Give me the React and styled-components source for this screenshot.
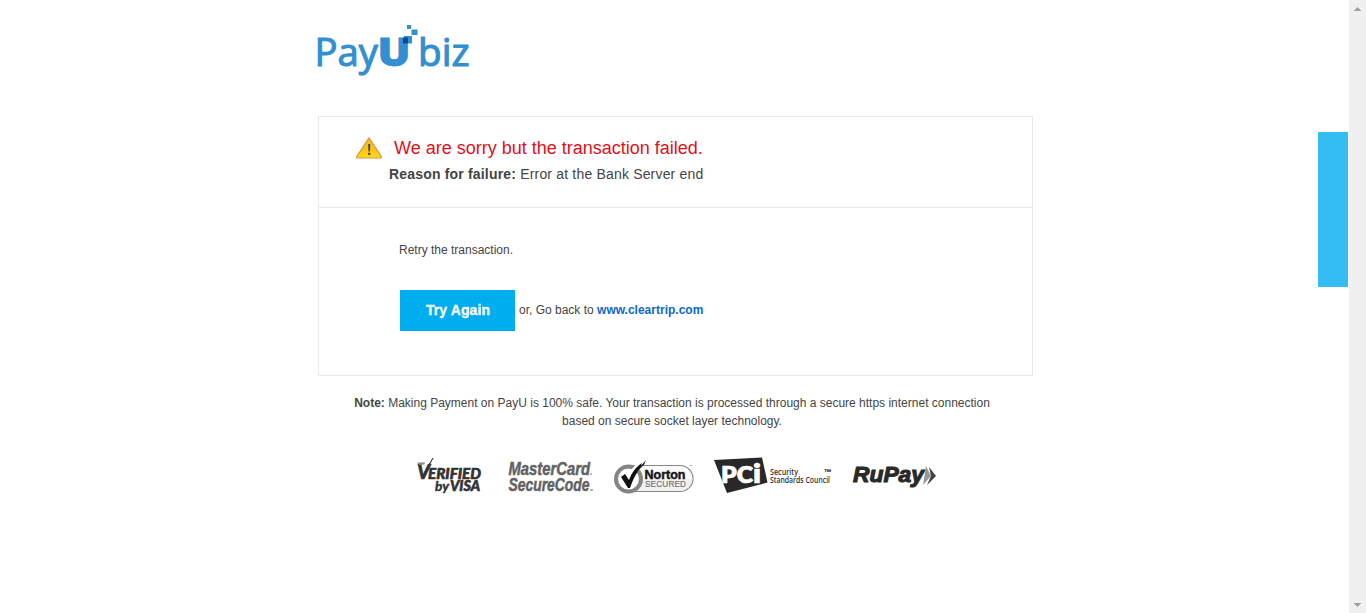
import React from 'react';
import styled, { createGlobalStyle } from 'styled-components';

const Global = createGlobalStyle`
  * { box-sizing: border-box; }
  html, body { margin: 0; background: #fff; overflow: hidden; }
  body { font-family: "Liberation Sans", Arial, sans-serif; font-size: 12px; color: #444; }
`;
const Shell = styled.div`
  display: flex;
  height: 613px;
  position: relative;
`;
const Content = styled.main`
  flex: 1;
  padding: 20px 0 0 318px;
`;
const Column = styled.div`
  width: 715px;
`;
const Header = styled.header`
  height: 96px;
  margin-left: -8px;
`;
const Panel = styled.section`
  height: 260px;
  border: 1px solid #e8e8e8;
`;
const Failure = styled.div`
  height: 91px;
  padding: 20px 0 0 37px;
  border-bottom: 1px solid #e8e8e8;
`;
const Title = styled.h1`
  margin: 0;
  height: 22px;
  display: flex;
  align-items: center;
  gap: 12px;
  font-size: 18px;
  font-weight: 400;
  line-height: 22px;
  color: #e0101c;
  white-space: nowrap;
`;
const Reason = styled.p`
  margin: 6px 0 0 33px;
  font-size: 14px;
  line-height: 18px;
  letter-spacing: 0.18px;
  white-space: nowrap;
`;
const Retry = styled.div`
  padding: 34px 0 0 80px;
`;
const RetryText = styled.p`
  margin: 0;
  line-height: 16px;
`;
const Actions = styled.div`
  margin: 32px 0 0 1px;
  display: flex;
  align-items: center;
  gap: 4px;
  white-space: pre;
`;
const BackText = styled.span`
  padding-bottom: 2px;
`;
const TryButton = styled.button`
  width: 115px;
  height: 41px;
  padding: 0 0 2px 1px;
  border: 0;
  background: #00aeef;
  color: #fff;
  font: bold 14px "Liberation Sans", Arial, sans-serif;
  letter-spacing: 0.1px;
  -webkit-text-stroke: 0.3px #fff;
`;
const Link = styled.a`
  color: #0b68ce;
  font-weight: bold;
`;
const Note = styled.p`
  margin: 18px 0 0;
  width: 708px;
  line-height: 18px;
  text-align: center;
`;
const Badges = styled.div`
  display: flex;
  margin: 20px 0 0 92px;
`;
const Mark = styled.svg`
  display: block;
  flex: none;
  overflow: visible;
  font-family: ${(p) => p.$font || '"Open Sans", sans-serif'};
`;
const SideTab = styled.aside`
  position: absolute;
  top: 132px;
  right: 18px;
  width: 30px;
  height: 155px;
  background: #33bdf2;
`;
const Scrollbar = styled.div`
  width: 17px;
  background: #f0f0f0;
  display: flex;
  flex-direction: column;
  justify-content: space-between;
`;

const PayULogo = () => (
  <Mark width="170" height="60" viewBox="310 20 170 60" fill="#338fd0" $font='"Open Sans", sans-serif'>
    <g stroke="#338fd0" strokeWidth="1.1" strokeLinejoin="round">
      <text x="314.500" y="66.200" fontSize="38.500" textLength="63.500" lengthAdjust="spacingAndGlyphs">Pay</text>
      <text x="418" y="66.200" fontSize="37.500" textLength="51.500" lengthAdjust="spacingAndGlyphs">biz</text>
    </g>
    <text x="377.500" y="66.300" fontSize="39" fontWeight="800" stroke="#338fd0" strokeWidth=".8" textLength="33" lengthAdjust="spacingAndGlyphs">U</text>
    <path d="M407 25h4v4h-4zM411.500 29.500h6v5.500h-6zM404 36h8v7.500h-8z" />
    <path d="M403 37.500h5v6h-5z" fill="#064a9b" />
  </Mark>
);

const Warning = () => (
  <Mark width="26" height="22" viewBox="0 0 26 22">
    <defs>
      <linearGradient id="amber" x2="0" y2="1">
        <stop stopColor="#f9bd22" />
        <stop offset=".55" stopColor="#fcc015" />
        <stop offset="1" stopColor="#ffdc16" />
      </linearGradient>
    </defs>
    <path d="M13 .8 L25.400 19.500 Q25.500 21 24.300 21 H1.700 Q.4 21 .7 19.500Z" fill="url(#amber)" stroke="#d59548" strokeWidth="1.200" strokeLinejoin="round" />
    <path d="M12 7h2.400l-.4 7.500h-1.600zM12 15.800h2.400v2.200h-2.400z" fill="#4a5362" />
  </Mark>
);

const Visa = () => (
  <Mark width="90" height="50" viewBox="410 450 90 50" fill="#333" $font='Lato, sans-serif'>
    <g fontStyle="italic" fontWeight="900" stroke="#333" strokeWidth=".6">
      <text x="417" y="479" fontSize="20" textLength="13" lengthAdjust="spacingAndGlyphs">V</text>
      <text x="428" y="478.500" fontSize="14.500" textLength="53" lengthAdjust="spacingAndGlyphs">ERIFIED</text>
      <text x="435" y="491" fontSize="14" strokeWidth=".3" textLength="14" lengthAdjust="spacingAndGlyphs">by</text>
      <text x="450" y="491" fontSize="14.500" textLength="30" lengthAdjust="spacingAndGlyphs">VISA</text>
    </g>
    <path d="M417 462.500h8l-.5 2-5 .5z" fill="#888" />
    <path d="M422 478l11-20-8.500 14z" stroke="#333" strokeWidth=".8" />
  </Mark>
);

const MasterCard = () => (
  <Mark width="105" height="50" viewBox="500 450 105 50" fill="#626262" $font='"Liberation Sans", sans-serif'>
    <g fontStyle="italic" fontWeight="700" fontSize="18.500" stroke="#626262" strokeWidth=".5">
      <text x="508.500" y="475" textLength="81.500" lengthAdjust="spacingAndGlyphs">MasterCard</text>
      <text x="508.500" y="491" textLength="81" lengthAdjust="spacingAndGlyphs">SecureCode</text>
    </g>
    <circle cx="591" cy="474" r=".8" />
    <path d="M590 489.500h3v1h-3z" />
  </Mark>
);

const Norton = () => (
  <Mark width="100" height="50" viewBox="605 450 100 50" $font='"Liberation Sans", sans-serif'>
    <rect x="620" y="465.500" width="73" height="26" rx="13" fill="#fafafa" stroke="#888" strokeWidth="1.200" />
    <path d="M629 479h63.500a13 13 0 0 1-12 12h-51.500z" fill="#f0f0f0" />
    <circle cx="628.500" cy="479" r="12.500" fill="#fff" stroke="#858585" strokeWidth="4" />
    <path d="M622 475l6 8c3-9 8-16 17-23" fill="none" stroke="#fff" strokeWidth="6" />
    <path d="M621 477l4-3 4 6c3-8 7-13 13-17l-1 3 5-6-2 5c-6 4-10 12-14 23h-2z" fill="#111" />
    <text x="644.500" y="478.500" fontSize="13" fontWeight="700" fill="#151515" stroke="#151515" strokeWidth=".5" textLength="41" lengthAdjust="spacingAndGlyphs">Norton</text>
    <text x="645" y="487" fontSize="8.200" fill="#707070" stroke="#707070" strokeWidth=".15" textLength="41" lengthAdjust="spacing">SECURED</text>
    <path d="M689.500 465.500h3" stroke="#999" strokeWidth=".8" />
  </Mark>
);

const PCI = () => (
  <Mark width="135" height="50" viewBox="705 450 135 50" $font='"Open Sans", sans-serif'>
    <path d="M714 460l48-2.500 5.500 25-40.500 10.500z" fill="#282828" />
    <g fill="#fff" fontWeight="800" fontFamily="Lato" stroke="#fff" strokeWidth=".6">
      <text x="721" y="483" fontSize="22" textLength="32" lengthAdjust="spacingAndGlyphs">PC</text>
      <text x="753" y="483" fontSize="26" textLength="8" lengthAdjust="spacingAndGlyphs">i</text>
    </g>
    <g fill="#333" fontSize="8" fontWeight="600">
      <text x="770" y="475" textLength="28" lengthAdjust="spacingAndGlyphs">Security</text>
      <text x="770" y="483" textLength="60" lengthAdjust="spacingAndGlyphs">Standards Council</text>
      <text x="824" y="475" fontSize="8" fontWeight="800" textLength="7" lengthAdjust="spacingAndGlyphs">™</text>
    </g>
  </Mark>
);

const RuPay = () => (
  <Mark width="110" height="50" viewBox="840 450 110 50" $font='"Liberation Sans", sans-serif'>
    <text x="853" y="482" fontSize="22.500" fontWeight="700" fontStyle="italic" fill="#292929" stroke="#292929" strokeWidth="1.1" textLength="71" lengthAdjust="spacingAndGlyphs">RuPay</text>
    <path d="M926 466l5 10-8 9z" fill="#999" />
    <path d="M929 467l7 9-9 9 4-9z" fill="#444" />
  </Mark>
);

const Arrow = ({ down }) => (
  <Mark width="17" height="17" viewBox="0 0 17 17" fill="#a3a3a3" shapeRendering="crispEdges">
    <path d={down ? 'M5 7h7v1H5zM6 8h5v1H6zM7 9h3v1H7zM8 10h1v1H8z' : 'M8 7h1v1H8zM7 8h3v1H7zM6 9h5v1H6zM5 10h7v1H5z'} />
  </Mark>
);

export default function App() {
  return (
    <>
      <Global />
      <Shell>
        <Content>
          <Column>
            <Header><PayULogo /></Header>
            <Panel>
              <Failure>
                <Title><Warning />We are sorry but the transaction failed.</Title>
                <Reason><b>Reason for failure:</b> Error at the Bank Server end</Reason>
              </Failure>
              <Retry>
                <RetryText>Retry the transaction.</RetryText>
                <Actions>
                  <TryButton>Try Again</TryButton>
                  <BackText>or, Go back to <Link>www.cleartrip.com</Link></BackText>
                </Actions>
              </Retry>
            </Panel>
            <Note>
              <b>Note:</b> Making Payment on PayU is 100% safe. Your transaction is processed through a secure https internet connection<br />
              based on secure socket layer technology.
            </Note>
            <Badges><Visa /><MasterCard /><Norton /><PCI /><RuPay /></Badges>
          </Column>
        </Content>
        <SideTab />
        <Scrollbar><Arrow /><Arrow down /></Scrollbar>
      </Shell>
    </>
  );
}
